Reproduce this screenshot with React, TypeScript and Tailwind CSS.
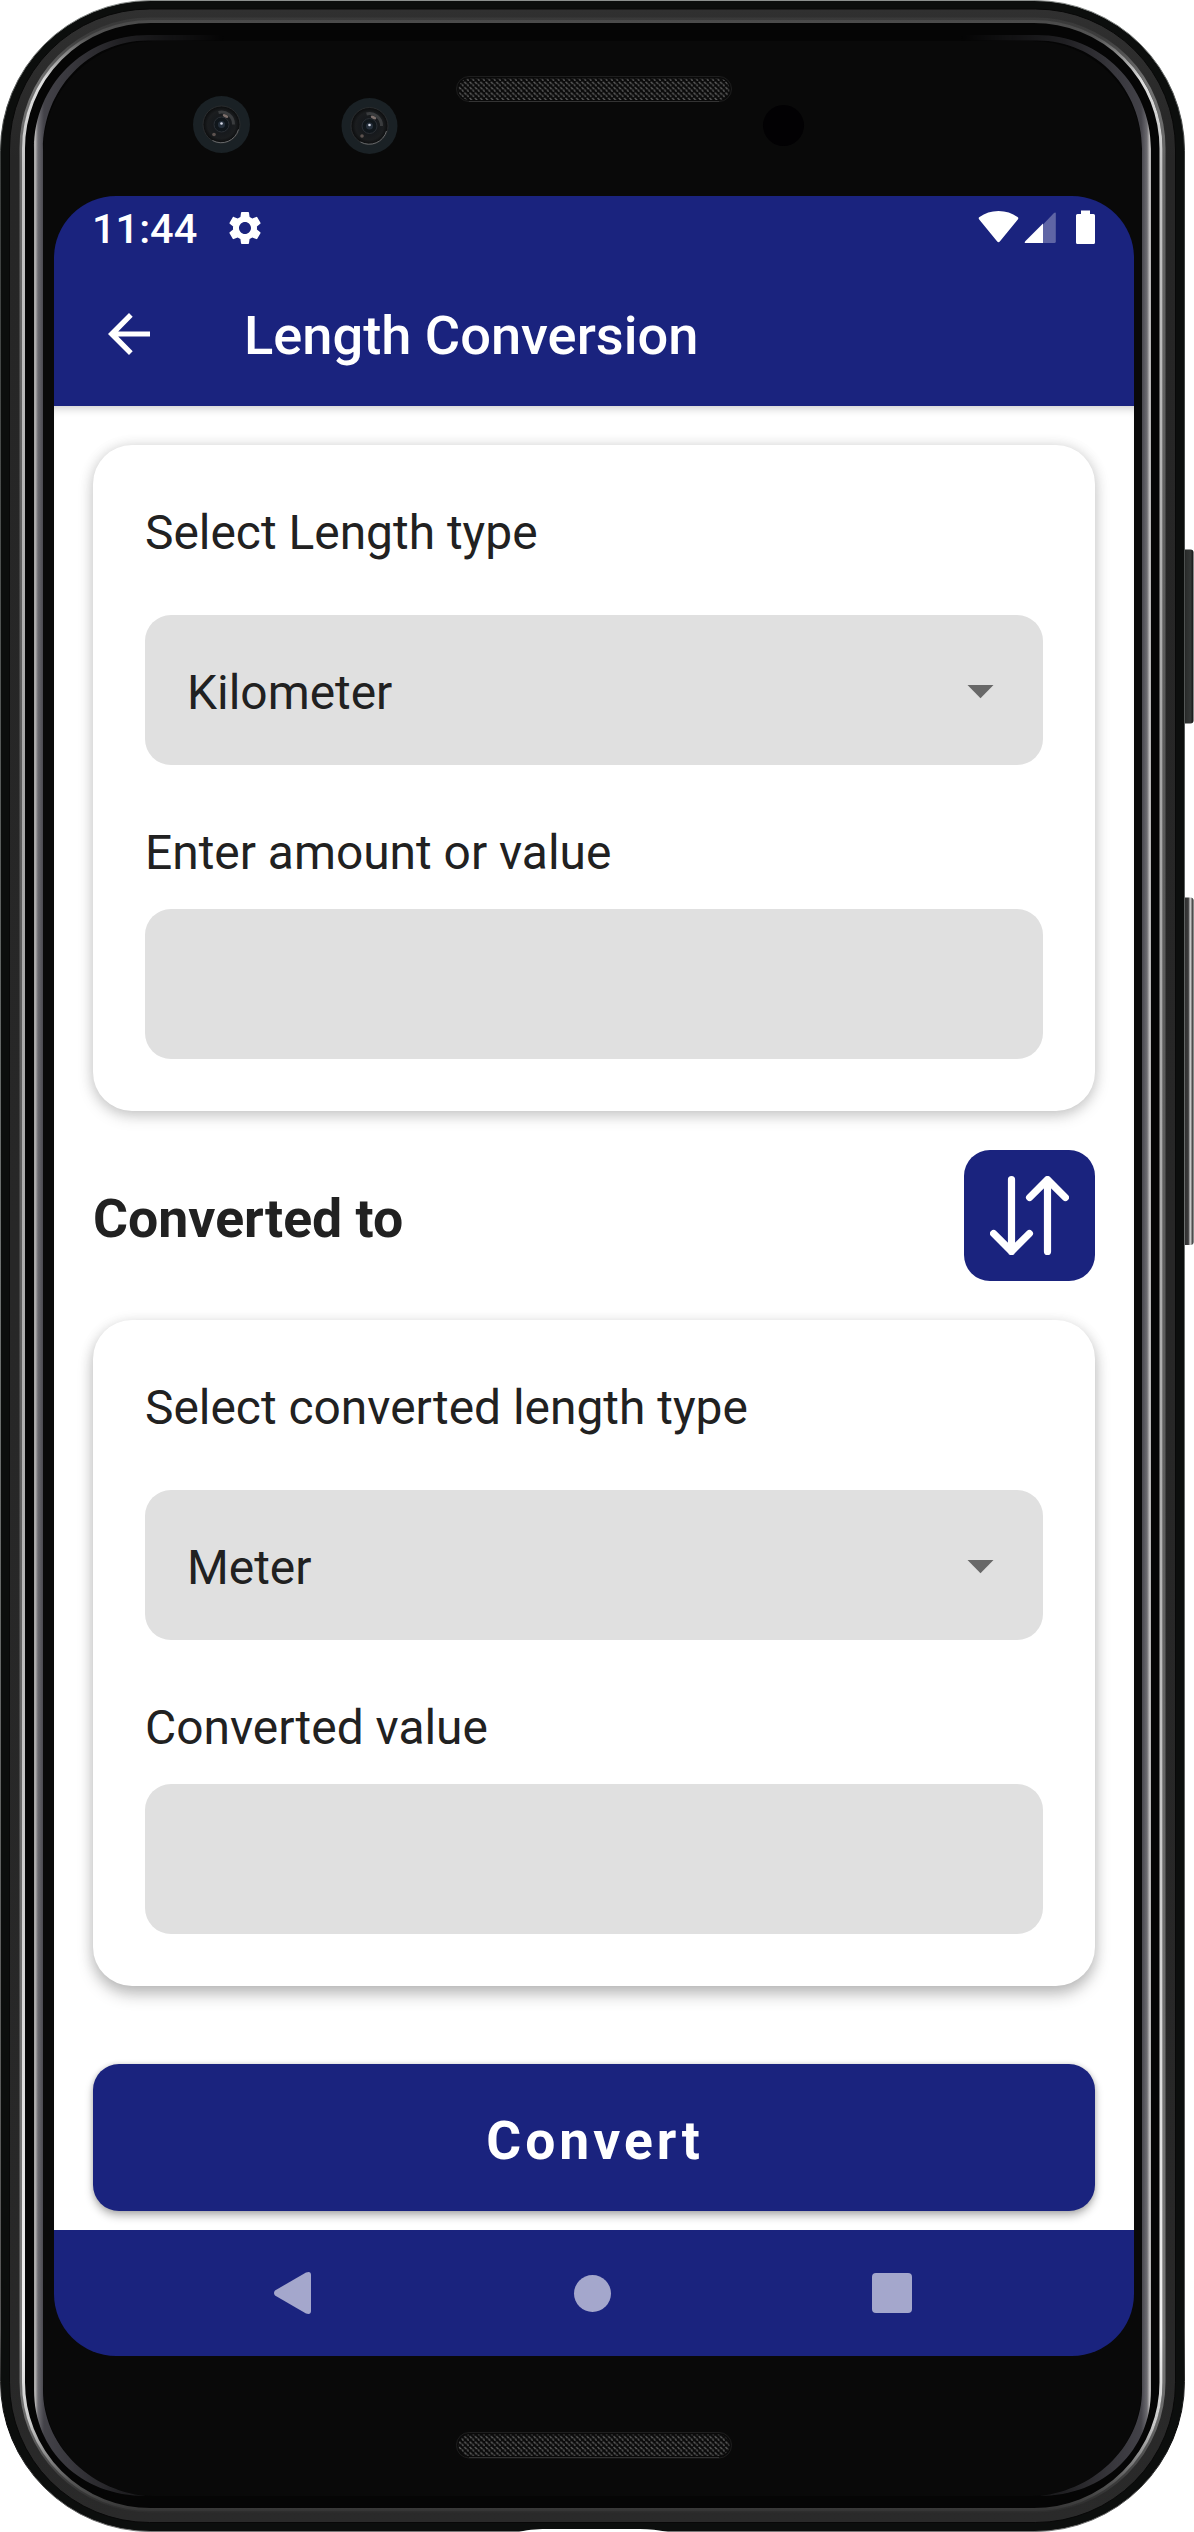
import React from "react";

function DeviceFrame() {
  return (
    <svg className="absolute inset-0" width="1194" height="2532" viewBox="0 0 1194 2532" aria-hidden="true">
      <defs>
        <linearGradient id="edge" x1="0" y1="0" x2="0" y2="1">
          <stop offset="0" stopColor="#8c908e" />
          <stop offset="0.06" stopColor="#3a3d3c" />
          <stop offset="0.5" stopColor="#6e7271" />
          <stop offset="0.92" stopColor="#555" />
          <stop offset="0.96" stopColor="#000" />
          <stop offset="1" stopColor="#777" />
        </linearGradient>
        <linearGradient id="band" x1="0" y1="0" x2="0" y2="1">
          <stop offset="0" stopColor="#303030" />
          <stop offset="0.06" stopColor="#262626" />
          <stop offset="0.94" stopColor="#282828" />
          <stop offset="1" stopColor="#2a2a2a" />
        </linearGradient>
        <linearGradient id="rim" gradientUnits="userSpaceOnUse" x1="0" y1="18" x2="0" y2="2512">
          <stop offset="0" stopColor="#484848" />
          <stop offset="0.008" stopColor="#555" />
          <stop offset="0.025" stopColor="#dedede" />
          <stop offset="0.06" stopColor="#c4c4c4" />
          <stop offset="0.3" stopColor="#a6a6a6" />
          <stop offset="0.6" stopColor="#b0b0b0" />
          <stop offset="0.93" stopColor="#f2f2f2" />
          <stop offset="0.965" stopColor="#c8c8c8" />
          <stop offset="0.988" stopColor="#555" />
          <stop offset="1" stopColor="#343434" />
        </linearGradient>
        <linearGradient id="sheenL" gradientUnits="userSpaceOnUse" x1="33" y1="0" x2="44" y2="0">
          <stop offset="0" stopColor="#8a8a8a" />
          <stop offset="0.2" stopColor="#b8b6b6" />
          <stop offset="0.45" stopColor="#706f74" />
          <stop offset="1" stopColor="#47464d" />
        </linearGradient>
        <linearGradient id="sheenR" gradientUnits="userSpaceOnUse" x1="1152" y1="0" x2="1141" y2="0">
          <stop offset="0" stopColor="#8a8a8a" />
          <stop offset="0.2" stopColor="#c8c6c6" />
          <stop offset="0.45" stopColor="#706f74" />
          <stop offset="1" stopColor="#47464d" />
        </linearGradient>
        <linearGradient id="fadeX" gradientUnits="userSpaceOnUse" x1="34" y1="0" x2="1151" y2="0">
          <stop offset="0" stopColor="#fff" />
          <stop offset="0.03" stopColor="#ccc" />
          <stop offset="0.08" stopColor="#666" />
          <stop offset="0.17" stopColor="#000" />
          <stop offset="0.83" stopColor="#000" />
          <stop offset="0.92" stopColor="#666" />
          <stop offset="0.97" stopColor="#ccc" />
          <stop offset="1" stopColor="#fff" />
        </linearGradient>
        <mask id="fade" maskUnits="userSpaceOnUse" x="0" y="0" width="1194" height="2532">
          <rect width="1194" height="2532" fill="url(#fadeX)" />
        </mask>
        <linearGradient id="key" x1="0" y1="0" x2="1" y2="0">
          <stop offset="0" stopColor="#111" />
          <stop offset="0.35" stopColor="#2c2e2d" />
          <stop offset="0.75" stopColor="#343736" />
          <stop offset="1" stopColor="#111" />
        </linearGradient>
        <linearGradient id="keyBright" x1="0" y1="0" x2="1" y2="0">
          <stop offset="0" stopColor="#111" />
          <stop offset="0.3" stopColor="#333" />
          <stop offset="0.55" stopColor="#3c3c3c" />
          <stop offset="0.72" stopColor="#d5d5d5" />
          <stop offset="0.85" stopColor="#777" />
          <stop offset="1" stopColor="#111" />
        </linearGradient>
        <radialGradient id="lens">
          <stop offset="0" stopColor="#1c2a33" />
          <stop offset="0.35" stopColor="#15181c" />
          <stop offset="0.75" stopColor="#1b1d1f" />
          <stop offset="1" stopColor="#0b0c0d" />
        </radialGradient>
        <pattern id="mesh" width="5.33" height="5.4" patternUnits="userSpaceOnUse">
          <rect width="5.33" height="5.4" fill="#0a0a0a" />
          <path d="M0.3 1.2h1.3v1.2h1.4M3 3.6h1.3v1.2H5.2" fill="none" stroke="#606060" strokeWidth="1" />
        </pattern>
      </defs>

      <rect x="1182" y="549.500" width="11.500" height="174" rx="3" fill="url(#key)" />
      <rect x="1182" y="897.500" width="11.500" height="347.500" rx="3" fill="url(#keyBright)" />

      <rect x="0.5" y="0.5" width="1184" height="2531" rx="150" fill="#0c0e0d" stroke="url(#edge)" />
      <rect x="9.5" y="9" width="1166" height="2513.500" rx="140" fill="url(#band)" stroke="#080808" />
      <rect x="21" y="19" width="1143" height="2492" rx="129" fill="none" stroke="url(#rim)" strokeWidth="3" opacity="0.4" />
      <rect x="23.500" y="21.500" width="1137.500" height="2488" rx="127" fill="#050505" stroke="url(#rim)" strokeWidth="3" />
      <rect x="43" y="41" width="1099" height="2455" rx="110" fill="#090909" />

      <g mask="url(#fade)">
        <path
          d="M240 35H148C84 35 34 85 34 149V2390C34 2450 80 2496 146 2496C88 2490 43 2444 43 2390V149C43 90 88 40.500 148 40.500H240Z"
          fill="url(#sheenL)"
        />
        <path
          d="M944 35H1037C1101 35 1151 85 1151 149V2390C1151 2450 1105 2496 1039 2496C1097 2490 1142 2444 1142 2390V149C1142 90 1097 40.500 1037 40.500H944Z"
          fill="url(#sheenR)"
        />
      </g>

      <Lens cx={221.5} cy={124.5} r={28.5} />
      <Lens cx={369.5} cy={126} r={28} />
      <circle cx="783.500" cy="125.500" r="20.500" fill="#020103" />

      <rect x="456.500" y="76.500" width="275" height="25" rx="12.500" fill="#0a0a0a" stroke="#1e1e1e" />
      <rect x="458.500" y="78.500" width="271" height="21.500" rx="10.700" fill="url(#mesh)" />
      <path d="M469 101.500H719" stroke="#333" />
      <rect x="456.500" y="2432.500" width="275" height="25.500" rx="12.500" fill="#0a0a0a" stroke="#1e1e1e" />
      <rect x="458.500" y="2434.500" width="271" height="21.500" rx="10.700" fill="url(#mesh)" />
      <path d="M469 2457.500H719" stroke="#333" />
      <path d="M519 2532C530 2529 540 2529 550 2529H640C650 2529 658 2530 668 2532Z" fill="#fff" />
    </svg>
  );
}

function Lens({ cx, cy, r }: { cx: number; cy: number; r: number }) {
  return (
    <g>
      <circle cx={cx} cy={cy} r={r} fill="#1a2125" />
      <circle cx={cx} cy={cy} r="18.500" fill="url(#lens)" stroke="#2a2c2e" strokeWidth="1" />
      <path d={`M${cx - 9} ${cy + 16}A18 18 0 0 0 ${cx + 17} ${cy + 5}`} fill="none" stroke="#66686a" strokeWidth="1" />
      <path d={`M${cx - 3} ${cy - 12}A12 12 0 0 1 ${cx + 12} ${cy}`} fill="none" stroke="#3a3c3e" strokeWidth="3" />
      <circle cx={cx} cy={cy} r="7.500" fill="#10161b" stroke="#2b2f35" />
      <circle cx={cx} cy={cy} r="3.500" fill="#26303c" />
      <circle cx={cx} cy={cy - 1} r="1.300" fill="#d9dcea" />
      <ellipse cx={cx + 4} cy={cy - 8.5} rx="3" ry="1.500" fill="#7d706c" transform={`rotate(25 ${cx + 4} ${cy - 8.5})`} />
      <circle cx={cx - 7.5} cy={cy + 10} r="1.800" fill="#5d5350" />
    </g>
  );
}

function StatusBar() {
  return (
    <div className="flex h-[66px] shrink-0 items-center pl-[38px] pr-[38px] text-white">
      <span className="text-[41.5px] font-medium leading-[66px]">11:44</span>
      <svg className="ml-[28px] mt-[-2px]" width="40" height="40" viewBox="0 0 24 24" fill="currentColor">
        <path d="M19.140 12.940c.04-.3.060-.61.060-.94 0-.32-.020-.64-.070-.94l2.030-1.580a.49.49 0 0 0 .12-.61l-1.920-3.320a.488.488 0 0 0-.59-.22l-2.390.96c-.5-.38-1.030-.7-1.620-.94l-.36-2.540a.484.484 0 0 0-.48-.41h-3.840c-.24 0-.43.170-.47.410l-.36 2.540c-.59.240-1.130.570-1.620.940l-2.390-.96c-.22-.08-.47 0-.59.220L2.740 8.870c-.12.210-.08.470.120.610l2.030 1.580c-.05.3-.09.63-.09.940s.020.640.070.940l-2.030 1.580a.49.49 0 0 0-.12.610l1.920 3.320c.12.220.37.290.59.220l2.390-.96c.5.380 1.030.700 1.620.940l.36 2.540c.05.240.240.410.480.410h3.840c.24 0 .44-.17.470-.41l.36-2.540c.59-.24 1.130-.56 1.620-.94l2.390.96c.22.080.470 0 .59-.22l1.920-3.320c.12-.22.070-.47-.12-.61l-2.010-1.580zM12 15.600c-1.980 0-3.600-1.620-3.600-3.600s1.620-3.600 3.600-3.600 3.600 1.620 3.600 3.600-1.620 3.600-3.600 3.600z" />
      </svg>
      <svg className="ml-auto mt-[-3px]" width="118" height="36" viewBox="0 0 118 36" fill="currentColor">
        <path d="M1.200 9.500Q0 8 1.500 7C7 3 13 1 20.500 1S34 3 39.500 7Q41 8 39.800 9.500L21.800 31.500Q20.500 33 19.200 31.500Z" />
        <path d="M77.800 3.500V31.500Q77.800 33 76.300 33H65V14.500L75.500 3.500Q77.800 1.500 77.800 3.500Z" opacity="0.3" />
        <path d="M65 13.500V33H48Q45.500 33 47.500 31Z" />
        <path d="M103 .5h9V4h3.500Q117 4 117 5.500V32.500Q117 34 115.500 34H99.500Q98 34 98 32.500V5.500Q98 4 99.500 4H103Z" />
      </svg>
    </div>
  );
}

function AppBar() {
  return (
    <header className="flex h-[144px] shrink-0 items-center pl-[54px] text-white">
      <svg className="mt-[-1px]" width="42" height="42" viewBox="0 0 42 42" fill="currentColor">
        <path d="M42 18.400H10.200L24.700 3.800L21 0L0 21L21 42L24.700 38.200L10.200 23.600H42Z" />
      </svg>
      <h1 className="ml-[94px] pt-[3px] text-[54.2px] font-medium leading-[64px]">Length Conversion</h1>
    </header>
  );
}

function Select({ value }: { value: string }) {
  return (
    <div className="mt-[54px] flex h-[150px] items-center justify-between rounded-[26px] bg-[#e0e0e0] pl-[42px] pr-[49px]">
      <span className="pt-[5px] text-[47.9px] leading-[56px]">{value}</span>
      <svg className="mt-[4px]" width="27" height="14" viewBox="0 0 27 14">
        <path d="M.5 0H26.500L13.500 13.200Z" fill="#686868" />
      </svg>
    </div>
  );
}

type CardProps = { label: string; unit: string; valueLabel: string; shadow: string };

function Card({ label, unit, valueLabel, shadow }: CardProps) {
  return (
    <section className={`h-[666px] shrink-0 rounded-[39px] bg-white px-[52px] pt-[60px] ${shadow}`}>
      <p className="text-[47.9px] leading-[56px]">{label}</p>
      <Select value={unit} />
      <p className="mt-[60px] text-[47.9px] leading-[56px]">{valueLabel}</p>
      <div className="mt-[28px] h-[150px] rounded-[26px] bg-[#e0e0e0]" />
    </section>
  );
}

export default function App() {
  return (
    <div className="relative h-[2532px] w-[1194px] overflow-hidden bg-white pl-[54px] pt-[196px] font-['Roboto',sans-serif] text-[#212121]">
      <DeviceFrame />
      <div className="relative flex h-[2160px] w-[1080px] flex-col overflow-hidden rounded-[62px] bg-[#1a237e]">
        <StatusBar />
        <AppBar />
        <main className="flex h-[1824px] shrink-0 flex-col overflow-hidden bg-white px-[39px] pt-[39px] shadow-[inset_0_8px_10px_-6px_rgba(0,0,0,0.22)]">
          <Card
            label="Select Length type"
            unit="Kilometer"
            valueLabel="Enter amount or value"
            shadow="shadow-[0_5px_16px_rgba(0,0,0,0.17),0_1px_14px_rgba(0,0,0,0.12)]"
          />
          <div className="my-[39px] flex h-[131px] shrink-0 items-center justify-between">
            <h2 className="pt-[6px] text-[53.6px] font-bold leading-[62px]">Converted to</h2>
            <button className="flex h-[131px] w-[131px] items-center justify-center rounded-[26px] bg-[#1a237e]" aria-label="Swap units">
              <svg width="79" height="79" viewBox="0 0 79 79" fill="none" stroke="#fff" strokeWidth="7.200" strokeLinecap="round" strokeLinejoin="round">
                <path d="M21.500 3.600V75.400M3.600 57.500L21.500 75.400L39.400 57.500M57.500 75.400V3.600M39.600 21.500L57.500 3.600L75.400 21.500" />
              </svg>
            </button>
          </div>
          <Card
            label="Select converted length type"
            unit="Meter"
            valueLabel="Converted value"
            shadow="shadow-[0_9px_16px_rgba(0,0,0,0.22),0_2px_14px_rgba(0,0,0,0.12)]"
          />
          <button className="mt-[78px] h-[147px] shrink-0 rounded-[26px] bg-[#1a237e] pl-[2px] pt-[7px] text-[53.4px] font-bold tracking-[4px] text-white shadow-[0_5px_8px_rgba(0,0,0,0.28),0_0_5px_rgba(0,0,0,0.15)]">
            Convert
          </button>
        </main>
        <nav className="flex h-[126px] shrink-0 items-center justify-between pl-[219px] pr-[222px]">
          <svg width="39" height="44" viewBox="0 0 39 44" fill="#a4a7cc">
            <path d="M2 19.500L33 1.500Q38 -.5 38 4V40Q38 44 33 42.500L2 24.500Q0 22 2 19.500Z" />
          </svg>
          <div className="ml-[1px] h-[37px] w-[37px] rounded-full bg-[#a4a7cc]" />
          <div className="h-[40px] w-[40px] rounded-[4px] bg-[#a4a7cc]" />
        </nav>
      </div>
    </div>
  );
}
